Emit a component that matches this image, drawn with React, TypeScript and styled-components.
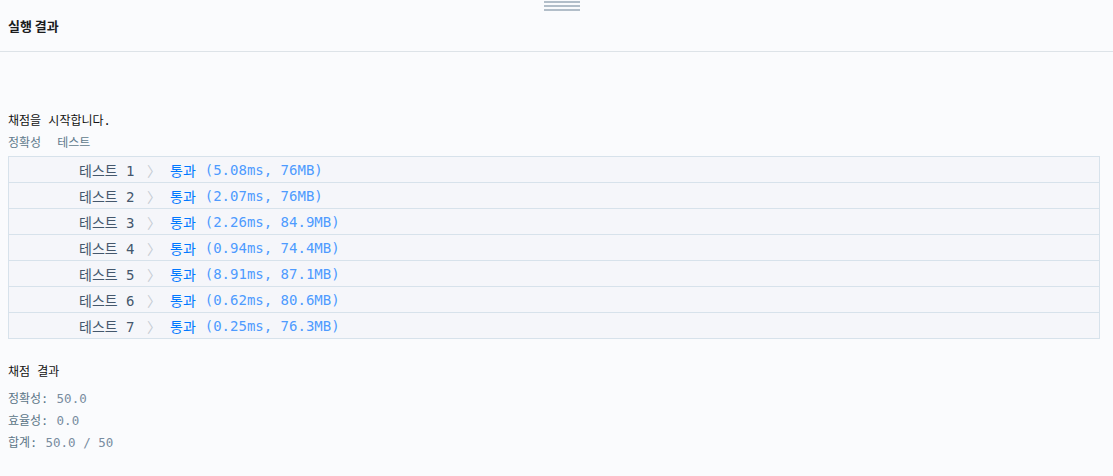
import styled, { createGlobalStyle } from "styled-components";

const GlobalStyle = createGlobalStyle`
  html, body {
    margin: 0;
    padding: 0;
    background: #fafbfd;
  }
  body {
    font-family: "DejaVu Sans Mono", "Noto Sans CJK KR", monospace;
    color: #000;
  }
`;

const Container = styled.div`
  width: 1113px;
  height: 476px;
  overflow: hidden;
  display: flex;
  flex-direction: column;
`;

const Header = styled.div`
  position: relative;
  height: 51px;
  border-bottom: 1px solid #dde3e8;
  display: flex;
  align-items: center;
  padding-left: 8px;
`;

const Title = styled.h2`
  margin: 0;
  font-family: "Noto Sans CJK KR", sans-serif;
  font-size: 13px;
  font-weight: 700;
  color: #1b1c1d;
`;

const Handle = styled.div`
  position: absolute;
  top: 1px;
  left: 544px;
  width: 36px;
  display: flex;
  flex-direction: column;
  gap: 2px;
`;

const HandleLine = styled.span`
  display: block;
  height: 2px;
  background: #b2bec9;
`;

const Body = styled.div`
  padding: 58px 13px 0 8px;
`;

const Line = styled.div<{ $muted?: boolean; $gap?: number }>`
  font-size: 12px;
  line-height: 22px;
  color: ${(p) => (p.$muted ? "#5b7587" : "#111")};
  margin-bottom: ${(p) => p.$gap ?? 0}px;
  white-space: pre;
`;

const Tabs = styled.div`
  display: flex;
  gap: 16px;
  font-size: 12px;
  line-height: 22px;
  color: #5f7a8c;
  margin-bottom: 2px;
`;

const Table = styled.div`
  border: 1px solid #d7e2eb;
  background: #f5f6fa;
`;

const Row = styled.div`
  display: flex;
  align-items: center;
  height: 25px;
  font-size: 14px;
  & + & {
    border-top: 1px solid #d7e2eb;
  }
`;

const TestName = styled.span`
  width: 138px;
  padding-left: 70px;
  box-sizing: border-box;
  color: #44576c;
  white-space: pre;
`;

const Chevron = styled.span`
  color: #c5ccd3;
  width: 23px;
`;

const Pass = styled.span`
  color: #0078ff;
  margin-right: 9px;
`;

const Detail = styled.span`
  color: #4e9bff;
`;

const Section = styled.div`
  margin-top: 22px;
`;

const Value = styled.span`
  color: #788ca0;
  font-size: 12.5px;
  margin-left: 1px;
`;

const results = [
  "(5.08ms, 76MB)",
  "(2.07ms, 76MB)",
  "(2.26ms, 84.9MB)",
  "(0.94ms, 74.4MB)",
  "(8.91ms, 87.1MB)",
  "(0.62ms, 80.6MB)",
  "(0.25ms, 76.3MB)",
];

export default function App() {
  return (
    <>
      <GlobalStyle />
      <Container>
        <Header>
          <Handle>
            <HandleLine />
            <HandleLine />
            <HandleLine />
          </Handle>
          <Title>실행 결과</Title>
        </Header>
        <Body>
          <Line>채점을 시작합니다.</Line>
          <Tabs>
            <span>정확성</span>
            <span>테스트</span>
          </Tabs>
          <Table>
            {results.map((r, i) => (
              <Row key={i}>
                <TestName>테스트 {i + 1}</TestName>
                <Chevron>〉</Chevron>
                <Pass>통과</Pass>
                <Detail>{r}</Detail>
              </Row>
            ))}
          </Table>
          <Section>
            <Line $gap={5}>채점 결과</Line>
            <Line $muted>
              {"정확성: "}
              <Value>50.0</Value>
            </Line>
            <Line $muted>
              {"효율성: "}
              <Value>0.0</Value>
            </Line>
            <Line $muted>
              {"합계: "}
              <Value>50.0 / 50</Value>
            </Line>
          </Section>
        </Body>
      </Container>
    </>
  );
}
